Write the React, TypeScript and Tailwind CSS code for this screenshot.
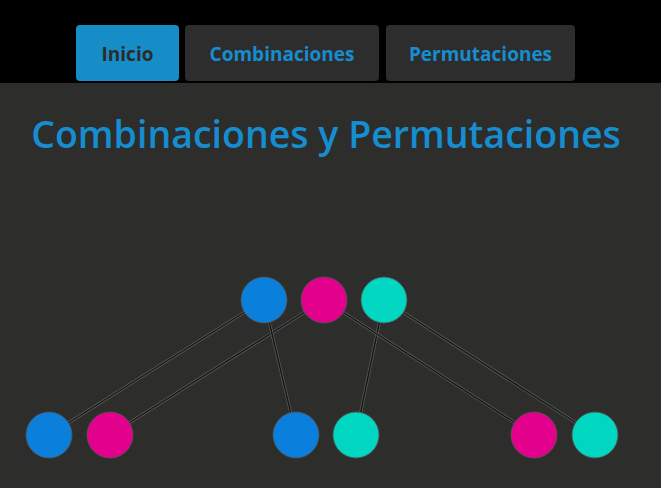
import React from "react";

const BLUE = "#0a7fdc";
const PINK = "#e3008c";
const TEAL = "#00d6c0";

const top = [
  { x: 264, y: 300, c: BLUE },
  { x: 324, y: 300, c: PINK },
  { x: 384, y: 300, c: TEAL },
];
const bottom = [
  { x: 49, y: 435, c: BLUE },
  { x: 110, y: 435, c: PINK },
  { x: 296, y: 435, c: BLUE },
  { x: 356, y: 435, c: TEAL },
  { x: 534, y: 435, c: PINK },
  { x: 595, y: 435, c: TEAL },
];
const lines: [number, number][] = [
  [0, 0],
  [1, 1],
  [0, 2],
  [2, 3],
  [1, 4],
  [2, 5],
];

export default function App() {
  return (
    <div className="w-[661px] h-[488px] bg-[#2d2d2b] overflow-hidden" style={{ fontFamily: '"Open Sans", "Noto Sans", sans-serif' }}>
      <div className="h-[83px] bg-black flex items-start pt-[25px] pl-[76px] gap-[6px]">
        <button className="h-[56px] w-[103px] pt-[3px] rounded-[4px] bg-[#168dc7] text-[#2b2b2b] font-bold text-[19px]">Inicio</button>
        <button className="h-[56px] w-[194px] pt-[3px] rounded-[4px] bg-[#2d2d2d] text-[#168dd0] font-bold text-[19px]">Combinaciones</button>
        <button className="h-[56px] w-[189px] pt-[3px] ml-[1px] rounded-[4px] bg-[#2d2d2d] text-[#168dd0] font-bold text-[19px]">Permutaciones</button>
      </div>
      <div className="relative h-[405px]">
        <h1 className="text-center pt-[26px] pr-[9px] text-[37.5px] leading-[50px] text-[#168dd0] font-semibold">Combinaciones y Permutaciones</h1>
        <svg className="absolute left-0 top-0" width="661" height="405" viewBox="0 83 661 405">
          {lines.map(([a, b], i) => (
            <g key={i}>
              <line x1={top[a].x} y1={top[a].y} x2={bottom[b].x} y2={bottom[b].y} stroke="#5a5a58" strokeWidth={3} />
              <line x1={top[a].x} y1={top[a].y} x2={bottom[b].x} y2={bottom[b].y} stroke="#161615" strokeWidth={1.4} />
            </g>
          ))}
          {[...top, ...bottom].map((n, i) => (
            <circle key={i} cx={n.x} cy={n.y} r={23} fill={n.c} stroke="#555" strokeWidth={0.8} />
          ))}
        </svg>
      </div>
    </div>
  );
}
